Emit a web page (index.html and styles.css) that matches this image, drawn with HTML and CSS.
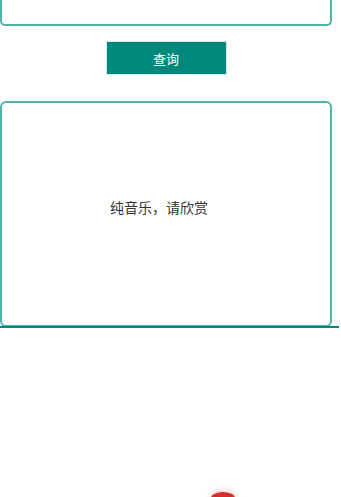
FILE: index.html
```html
<!DOCTYPE html>
<html lang="zh">
<head>
<meta charset="utf-8">
<link rel="stylesheet" href="styles.css">
</head>
<body>
<div class="page">
  <div class="top-box"></div>
  <div class="btn-row"><button class="query-btn">查询</button></div>
  <div class="lyric-box"><p class="lyric-text">纯音乐，请欣赏</p></div>
  <div class="divider"></div>
  <div class="bottom-area"><span class="red-dot"></span></div>
</div>
</body>
</html>
```
FILE: styles.css
```css
html, body {
  margin: 0;
  padding: 0;
  background: #ffffff;
  font-family: "Noto Sans CJK SC", "Noto Sans", sans-serif;
}
.page {
  width: 341px;
  height: 497px;
  overflow: hidden;
  position: relative;
}
.top-box {
  box-sizing: border-box;
  width: 332px;
  height: 26px;
  border: 2px solid #52b3a9;
  border-top: none;
  border-radius: 0 0 5px 5px;
}
.btn-row {
  width: 332px;
  display: flex;
  justify-content: center;
  padding-top: 15px;
}
.query-btn {
  box-sizing: border-box;
  width: 121px;
  height: 34px;
  border: 1px solid #d4ecea;
  background: #00897b;
  color: #ffffff;
  font-family: "Noto Sans CJK SC", sans-serif;
  font-size: 13px;
  padding: 0;
  margin: 0;
}
.lyric-box {
  box-sizing: border-box;
  width: 332px;
  height: 226px;
  margin-top: 26px;
  border: 2px solid #52b3a9;
  border-radius: 6px;
  display: flex;
  align-items: center;
  justify-content: center;
  padding-bottom: 14px;
  padding-right: 14px;
}
.lyric-text {
  margin: 0;
  font-size: 14px;
  color: #333333;
  line-height: 16px;
}
.divider {
  width: 339px;
  height: 2px;
  background: #00897b;
  margin-top: -1px;
}
.bottom-area {
  height: 170px;
  position: relative;
}
.red-dot {
  position: absolute;
  left: 211px;
  top: 164px;
  width: 24px;
  height: 12px;
  border-radius: 50%;
  background: #d32f2f;
  box-shadow: 0 -1px 5px 2px rgba(211, 47, 47, 0.15);
}
```
